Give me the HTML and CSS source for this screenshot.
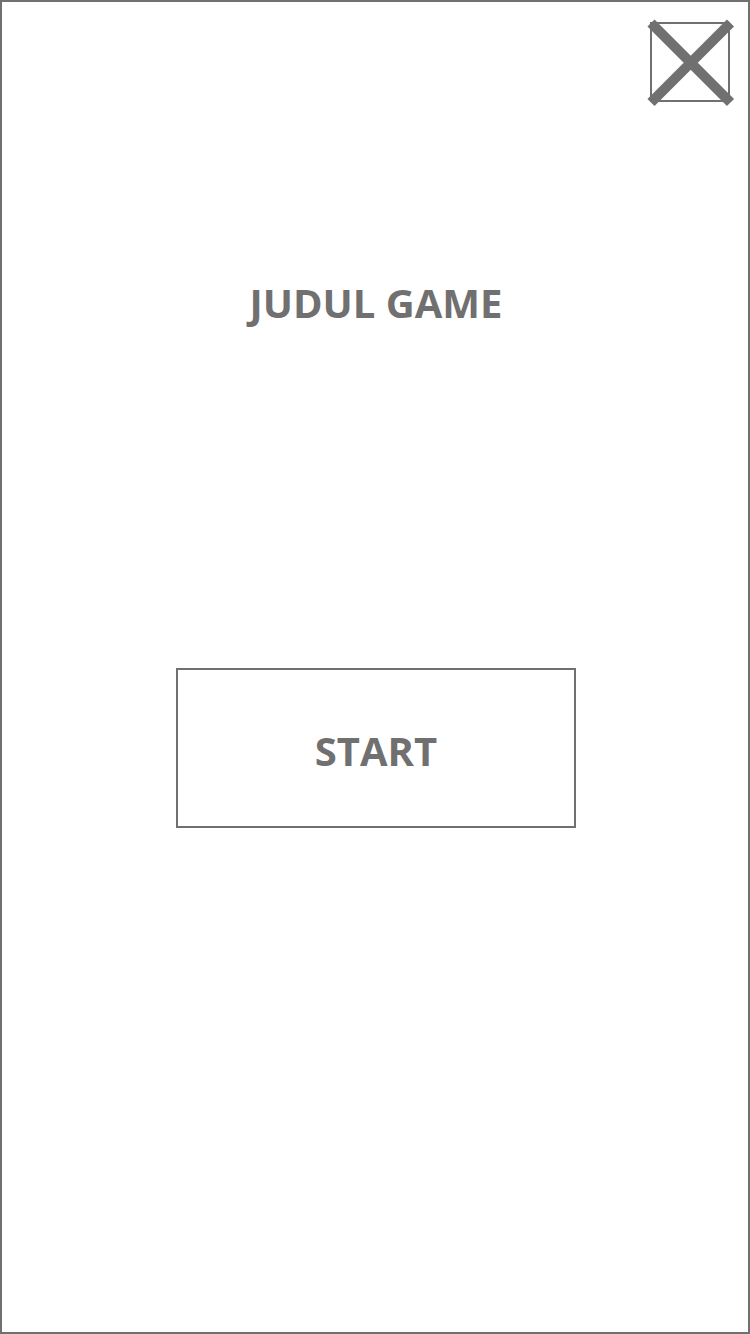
FILE: index.html
```html
<!DOCTYPE html>
<html lang="id">
<head>
<meta charset="utf-8">
<meta name="viewport" content="width=device-width, initial-scale=1">
<title>Judul Game</title>
<link rel="stylesheet" href="styles.css">
</head>
<body>
<main class="screen">
  <header class="topbar">
    <button class="close" type="button" aria-label="Tutup">
      <svg class="close-icon" viewBox="0 0 88 88" aria-hidden="true">
        <rect x="4" y="4" width="78" height="78" fill="none" stroke="#707070" stroke-width="2"/>
        <path d="M4 4 83.5 83.5M83.5 4 4 83.5" fill="none" stroke="#707070" stroke-width="10"/>
      </svg>
    </button>
  </header>
  <h1 class="title">JUDUL GAME</h1>
  <button class="start" type="button">START</button>
</main>
</body>
</html>
```

FILE: styles.css
```css
* {
  box-sizing: border-box;
}

body {
  margin: 0;
  background: #fff;
  color: #707070;
  font-family: "Segoe UI", "Open Sans", "Noto Sans", sans-serif;
}

.screen {
  display: flex;
  flex-direction: column;
  align-items: center;
  min-height: 100vh;
  padding-left: 2px;
  border: 2px solid #707070;
}

.topbar {
  display: flex;
  justify-content: flex-end;
  width: 100%;
  padding: 17px 13px 0 0;
}

.close {
  padding: 0;
  border: 0;
  background: none;
  cursor: pointer;
}

.close-icon {
  display: block;
  width: 88px;
  height: 88px;
}

.title {
  margin: 168px 0 0;
  font-size: 40px;
  font-weight: 700;
  line-height: 56px;
}

.start {
  width: 400px;
  max-width: 100%;
  height: 160px;
  margin-top: 337px;
  padding: 6px 6px 0;
  border: 2px solid #707070;
  background: #fff;
  color: inherit;
  font-family: inherit;
  font-size: 40px;
  font-weight: 700;
  line-height: 56px;
  cursor: pointer;
}
```
